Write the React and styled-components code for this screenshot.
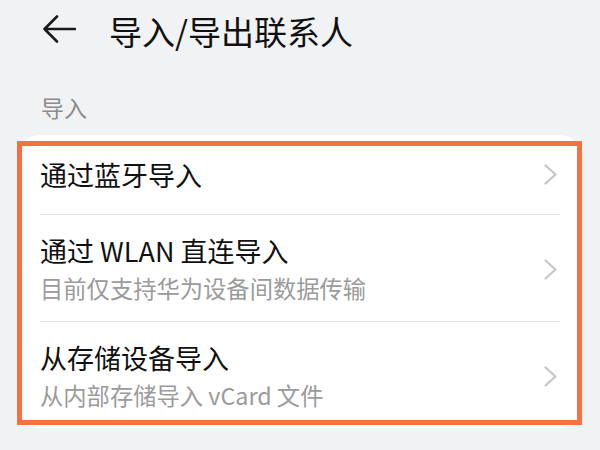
import React from "react"
import styled, { createGlobalStyle } from "styled-components"

const GlobalStyle = createGlobalStyle`
  html, body {
    margin: 0;
    padding: 0;
    background: #f1f2f4;
  }

  body {
    font-family: "Noto Sans CJK SC", "Noto Sans", sans-serif;
    color: #151515;
  }
`

const Page = styled.div`
  width: 600px;
  height: 450px;
  overflow: hidden;
  background: #f1f2f4;
`

const Header = styled.header`
  display: flex;
  align-items: center;
  gap: 33px;
  height: 62px;
  padding-left: 43px;
`

const BackButton = styled.button`
  display: flex;
  align-items: center;
  padding: 0;
  margin-top: -4px;
  border: none;
  background: none;
  color: #1a1a1a;
  cursor: pointer;
`

const Title = styled.h1`
  margin: 0;
  font-size: 33px;
  line-height: 40px;
  font-weight: 400;
  color: #111111;
`

const SectionLabel = styled.div`
  margin: 30px 0 13px 41px;
  font-size: 23px;
  line-height: 30px;
  color: #8c8c8c;
`

const Card = styled.div`
  position: relative;
  margin: 0 20px;
  padding: 0 20px;
  background: #ffffff;
  border-radius: 20px;
`

const Highlight = styled.div`
  position: absolute;
  left: -3px;
  right: -2px;
  top: 6px;
  bottom: 3px;
  border: 5px solid #f7703f;
  pointer-events: none;
`

const Row = styled.div`
  display: flex;
  align-items: center;
  justify-content: space-between;
  min-height: ${({ $twoLine }) => ($twoLine ? "106px" : "80px")};
  padding: ${({ $twoLine }) => ($twoLine ? "18px 0 16px" : "0")};
  box-sizing: border-box;
  border-bottom: ${({ $last }) => ($last ? "none" : "1.5px solid #e3e3e3")};
  cursor: pointer;
`

const RowText = styled.div`
  display: flex;
  flex-direction: column;
  gap: 2px;
`

const RowTitle = styled.span`
  font-size: 27px;
  line-height: 36px;
  font-weight: 400;
  color: #111111;
`

const RowSubtitle = styled.span`
  font-size: 23.3px;
  line-height: 34px;
  color: #9b9b9b;
`

const Chevron = styled.svg`
  flex-shrink: 0;
  margin-right: 3px;
`

const BackArrow = () => (
  <svg width="33" height="28" viewBox="0 0 33 28" fill="none">
    <path
      d="M14 1.5 L1.5 14 L14 26.5 M1.5 14 H32"
      stroke="currentColor"
      strokeWidth="2.6"
      strokeLinecap="round"
      strokeLinejoin="round"
    />
  </svg>
)

const ChevronRight = () => (
  <Chevron width="13" height="21" viewBox="0 0 13 21" fill="none">
    <path
      d="M1.5 1.5 L11.5 10.5 L1.5 19.5"
      stroke="#c6c6c6"
      strokeWidth="2.2"
      strokeLinecap="round"
      strokeLinejoin="round"
    />
  </Chevron>
)

const options = [
  { title: "通过蓝牙导入" },
  { title: "通过 WLAN 直连导入", subtitle: "目前仅支持华为设备间数据传输" },
  { title: "从存储设备导入", subtitle: "从内部存储导入 vCard 文件" },
]

export default function App() {
  return (
    <Page>
      <GlobalStyle />
      <Header>
        <BackButton aria-label="返回">
          <BackArrow />
        </BackButton>
        <Title>导入/导出联系人</Title>
      </Header>

      <SectionLabel>导入</SectionLabel>

      <Card>
        {options.map((item, i) => (
          <Row
            key={item.title}
            $twoLine={!!item.subtitle}
            $last={i === options.length - 1}
          >
            <RowText>
              <RowTitle>{item.title}</RowTitle>
              {item.subtitle && <RowSubtitle>{item.subtitle}</RowSubtitle>}
            </RowText>
            <ChevronRight />
          </Row>
        ))}
        <Highlight />
      </Card>
    </Page>
  )
}
